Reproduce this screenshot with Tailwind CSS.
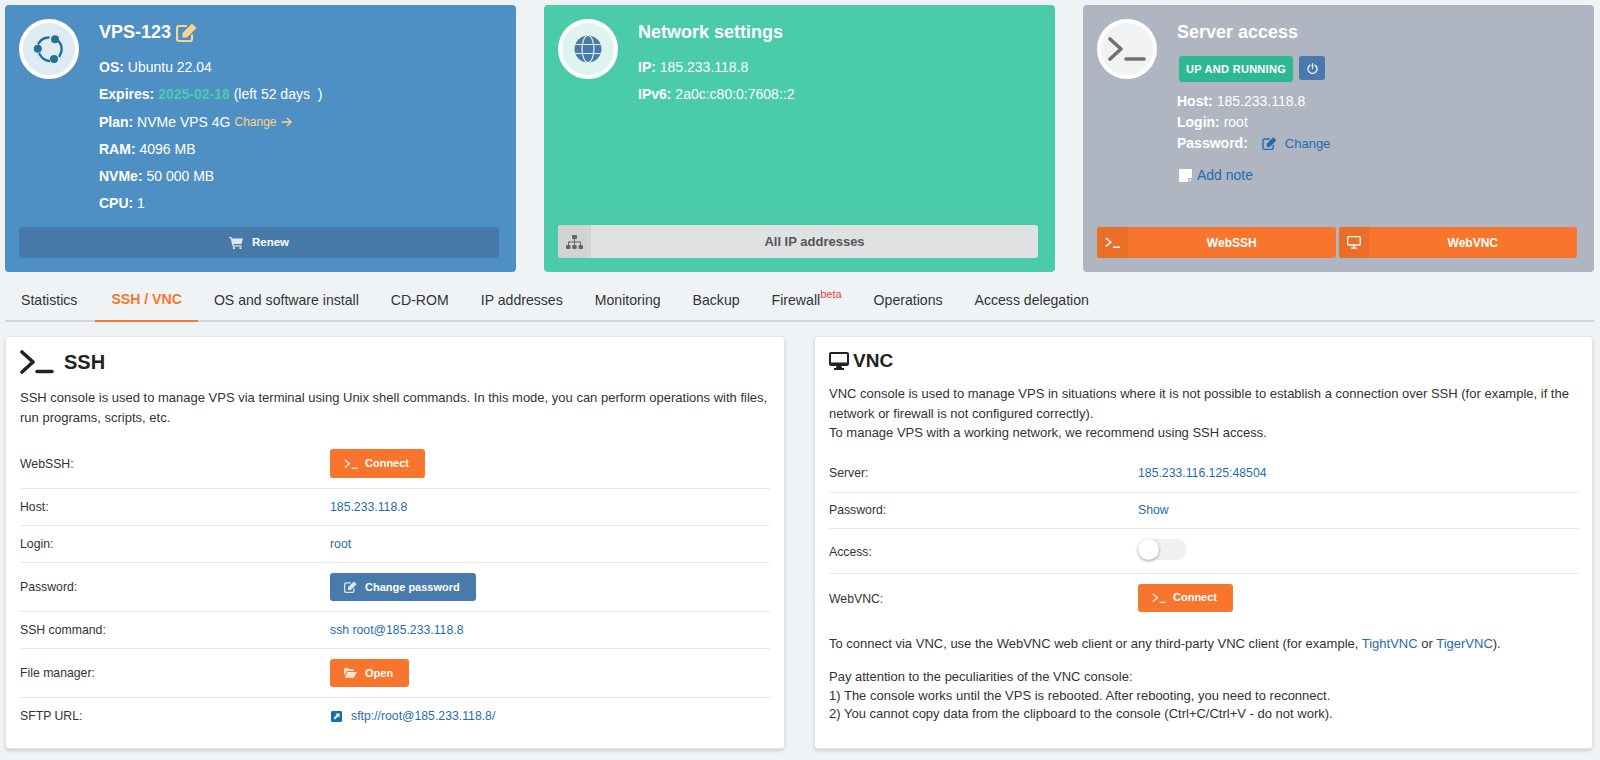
<!DOCTYPE html>
<html lang="en">
<head>
  <meta charset="UTF-8" />
  <title>VPS-123</title>
  <script src="https://cdn.jsdelivr.net/npm/@tailwindcss/browser@4"></script>
</head>
<body class="bg-[#eff3f6] font-['Liberation_Sans',Arial,sans-serif] text-[13px] text-[#333] w-[1600px] h-[760px] overflow-hidden pl-[5px] pr-[6px] pt-[5px]">

  <!-- top cards -->
  <div class="grid grid-cols-[511px_511px_511px] gap-[28px] h-[267px] text-white text-[14px]">

    <div class="bg-[#4e90c3] rounded-[4px] pl-[14px] pr-[17px] py-[14px] flex flex-col">
      <div class="flex flex-1">
        <div class="w-[60px] h-[60px] rounded-full border-[4px] border-white bg-[#dfebf3] flex items-center justify-center shrink-0">
          <svg class="w-[32px] h-[32px]" viewBox="0 0 32 32" fill="none" stroke="#22709a" stroke-width="2.400" stroke-linecap="round">
            <path d="M5.500 10.500A12 12 0 0 1 15.500 4.500" />
            <path d="M26 8.500A13 13 0 0 1 26.500 23" />
            <path d="M16 28A13 13 0 0 1 6.500 21" />
            <circle cx="22" cy="6.300" r="4" fill="#22709a" stroke="none" />
            <circle cx="4.800" cy="15.800" r="4" fill="#22709a" stroke="none" />
            <circle cx="21" cy="26" r="4" fill="#22709a" stroke="none" />
          </svg>
        </div>
        <div class="ml-[20px]">
          <div class="flex items-center h-[26px] text-[18px] font-bold">VPS-123
            <svg class="w-[21px] h-[19px] ml-[5px]" viewBox="0 0 21 19" fill="none" stroke="#fbd38d" stroke-width="2.200">
              <path d="M16 11.500V16a2 2 0 0 1-2 2H3a2 2 0 0 1-2-2V5a2 2 0 0 1 2-2h8" />
              <path d="M6.500 10 16 .5 20.500 5 11 14.500H6.500z" fill="#fbd38d" stroke="none" />
            </svg>
          </div>
          <div class="mt-[9px] leading-[27.300px]">
            <div><b>OS:</b> Ubuntu 22.04</div>
            <div><b>Expires:</b> <b class="text-[#4acba9]">2025-02-18</b> (left 52 days&nbsp; )</div>
            <div class="flex items-center gap-[4px]"><span><b>Plan:</b> NVMe VPS 4G</span>
              <span class="text-[12px] text-[#fbd38d]">Change</span>
              <svg class="w-[11px] h-[10px]" viewBox="0 0 11 10" fill="none" stroke="#fbd38d" stroke-width="1.400"><path d="M.5 5h9.500M6 1l4 4-4 4" /></svg>
            </div>
            <div><b>RAM:</b> 4096 MB</div>
            <div><b>NVMe:</b> 50 000 MB</div>
            <div><b>CPU:</b> 1</div>
          </div>
        </div>
      </div>
      <div class="h-[31px] bg-[#487aa9] rounded-[3px] flex items-center justify-center gap-[9px] text-[11.500px] font-bold">
        <svg class="w-[14px] h-[12px]" viewBox="0 0 14 12" fill="#dfe8f0"><path d="M0 0h2.600l.4 1.500h11l-1.600 5.600H4.400l.3 1.200h8v1.200H3.500L1.700 1.200H0z" /><circle cx="5" cy="11" r="1.100" /><circle cx="11.500" cy="11" r="1.100" /></svg>
        Renew
      </div>
    </div>

    <div class="bg-[#4acba9] rounded-[4px] pl-[14px] pr-[17px] py-[14px] flex flex-col">
      <div class="flex flex-1">
        <div class="w-[60px] h-[60px] rounded-full border-[4px] border-white bg-[#dff4ee] flex items-center justify-center shrink-0">
          <svg class="w-[28px] h-[28px]" viewBox="0 0 28 28">
            <circle cx="14" cy="14" r="13.500" fill="#487aa9" />
            <g fill="none" stroke="#dff4ee" stroke-width="1.200">
              <path d="M0 9.500h28M0 18.500h28" />
              <ellipse cx="14" cy="14" rx="6" ry="13.500" />
            </g>
          </svg>
        </div>
        <div class="ml-[20px]">
          <div class="flex items-center h-[26px] text-[18px] font-bold">Network settings</div>
          <div class="mt-[9px] leading-[27.300px]">
            <div><b>IP:</b> 185.233.118.8</div>
            <div><b>IPv6:</b> 2a0c:c80:0:7608::2</div>
          </div>
        </div>
      </div>
      <div class="h-[33px] bg-[#e0e1e3] rounded-[3px] flex overflow-hidden text-[13px] font-bold text-[#555]">
        <div class="w-[33px] bg-[#d1d3d5] flex items-center justify-center">
          <svg class="w-[17px] h-[14px]" viewBox="0 0 17 14" fill="#666"><rect x="6" y="0" width="5" height="4" rx=".7" /><rect x="0" y="10" width="4.500" height="4" rx="1" /><rect x="6.200" y="10" width="4.500" height="4" rx="1" /><rect x="12.500" y="10" width="4.500" height="4" rx="1" /><path d="M8 4h1v2.500h6V10h-1V7.500H9V10H8V7.500H3V10H2V6.500h6z" /></svg>
        </div>
        <div class="flex-1 flex items-center justify-center">All IP addresses</div>
      </div>
    </div>

    <div class="bg-[#afb5c1] rounded-[4px] pl-[14px] pr-[17px] py-[14px] flex flex-col">
      <div class="flex flex-1">
        <div class="w-[60px] h-[60px] rounded-full border-[4px] border-white bg-[#f1f2f3] flex items-center justify-center shrink-0">
          <svg class="w-[38px] h-[26px]" viewBox="0 0 38 26" fill="none" stroke="#717171" stroke-width="3.600" stroke-linecap="round" stroke-linejoin="round"><path d="M2 3l11 10L2 23M18 23h18" /></svg>
        </div>
        <div class="ml-[20px]">
          <div class="flex items-center h-[26px] text-[18px] font-bold">Server access</div>
          <div class="flex ml-[2px] mt-[11px] gap-[6px]">
            <div class="h-[26px] w-[114px] rounded-[3px] bg-[#2db894] flex items-center justify-center text-[11px] font-bold tracking-[0.3px]">UP AND RUNNING</div>
            <div class="h-[24px] w-[26px] rounded-[3px] bg-[#487bab] flex items-center justify-center">
              <svg class="w-[11px] h-[11px]" viewBox="0 0 11 11" fill="none" stroke="#e6eef5" stroke-width="1.400" stroke-linecap="round"><path d="M3 2.200a4.500 4.500 0 1 0 5 0M5.500 .8v4.400" /></svg>
            </div>
          </div>
          <div class="mt-[9px] leading-[21px]">
            <div><b>Host:</b> 185.233.118.8</div>
            <div><b>Login:</b> root</div>
            <div class="flex items-center"><b>Password:</b>
              <svg class="w-[15px] h-[13px] ml-[14px]" viewBox="0 0 21 19" fill="none" stroke="#1f6bb0" stroke-width="2"><path d="M16 11.500V16a2 2 0 0 1-2 2H3a2 2 0 0 1-2-2V5a2 2 0 0 1 2-2h8" /><path d="M6.500 10 16 .5 20.500 5 11 14.500H6.500z" fill="#1f6bb0" stroke="none" /></svg>
              <span class="ml-[8px] text-[13px] text-[#1f6bb0]">Change</span>
            </div>
          </div>
          <div class="flex items-center mt-[11px] ml-[2px] text-[#1f6bb0]">
            <svg class="w-[13px] h-[13px]" viewBox="0 0 13 13" fill="#fff"><path d="M1 0h11a1 1 0 0 1 1 1v8h-3a1 1 0 0 0-1 1v3H1a1 1 0 0 1-1-1V1a1 1 0 0 1 1-1z" /><path d="M10.500 10.500H13L10.500 13z" /></svg>
            <span class="ml-[5px]">Add note</span>
          </div>
        </div>
      </div>
      <div class="grid grid-cols-2 gap-[3px] text-[12px] font-bold">
        <div class="h-[31px] bg-[#f7752c] rounded-[3px] flex overflow-hidden">
          <div class="w-[31px] bg-[#ea6e28] flex items-center justify-center">
            <svg class="w-[15px] h-[11px]" viewBox="0 0 15 11" fill="none" stroke="#fff" stroke-width="1.500"><path d="M.8 1l5 4.200-5 4.300M8 10.200h7" /></svg>
          </div>
          <div class="flex-1 flex items-center justify-center">WebSSH</div>
        </div>
        <div class="h-[31px] bg-[#f7752c] rounded-[3px] flex overflow-hidden">
          <div class="w-[30px] bg-[#ea6e28] flex items-center justify-center">
            <svg class="w-[14px] h-[13px]" viewBox="0 0 14 13" fill="none" stroke="#fff" stroke-width="1.300"><rect x=".7" y=".7" width="12.600" height="8.300" rx="1" /><path d="M7 9v3M4 12.200h6" /></svg>
          </div>
          <div class="flex-1 flex items-center justify-center">WebVNC</div>
        </div>
      </div>
    </div>
  </div>

  <!-- tabs -->
  <div class="flex h-[50px] pt-[10px] border-b-[2px] border-[#d3d6d9] text-[14.100px] text-[#333] items-stretch">
    <div class="pl-[16px] pr-[18px] flex items-center">Statistics</div>
    <div class="px-[16px] flex items-center font-bold text-[#f7752c] border-b-[2px] border-[#f7752c] -mb-[2px] pb-[2px]">SSH / VNC</div>
    <div class="px-[16px] flex items-center">OS and software install</div>
    <div class="px-[16px] flex items-center">CD-ROM</div>
    <div class="px-[16px] flex items-center">IP addresses</div>
    <div class="px-[16px] flex items-center">Monitoring</div>
    <div class="px-[16px] flex items-center">Backup</div>
    <div class="px-[16px] flex items-center">Firewall<sup class="text-[11px] text-[#ef4444] -mt-[4px]">beta</sup></div>
    <div class="px-[16px] flex items-center">Operations</div>
    <div class="px-[16px] flex items-center">Access delegation</div>
  </div>

  <!-- panels -->
  <div class="grid grid-cols-[780px_779px] gap-[29px] mt-[14px]">

    <div class="bg-white border border-[#e3e6e9] rounded-[4px] shadow-[0_2px_3px_rgba(0,0,0,.14)] h-[413px] px-[14px] pt-[13px] text-[12.250px]">
      <div class="flex items-center h-[24px] text-[20px] font-bold text-[#222]">
        <svg class="w-[34px] h-[24px] mr-[10px]" viewBox="0 0 34 24" fill="none" stroke="#222" stroke-width="3.600" stroke-linecap="round" stroke-linejoin="round"><path d="M2 2l11 10L2 22M17 21.500h15" /></svg>
        SSH
      </div>
      <p class="mt-[14px] leading-[20px] text-[13px]">SSH console is used to manage VPS via terminal using Unix shell commands. In this mode, you can perform operations with files,<br>run programs, scripts, etc.</p>

      <div class="mt-[11px]">
        <div class="grid grid-cols-[310px_1fr] items-center py-[10px] h-[49px]">
          <div class="mt-[1px]">WebSSH:</div>
          <div class="w-[95px] h-[29px] bg-[#f7752c] rounded-[3px] flex items-center text-white font-bold text-[11px] pl-[14px] gap-[7px]">
            <svg class="w-[14px] h-[10px]" viewBox="0 0 15 11" fill="none" stroke="#fff" stroke-width="1.300"><path d="M.8 1l5 4.200-5 4.300M8 10.200h7" /></svg>Connect
          </div>
        </div>
        <div class="grid grid-cols-[310px_1fr] items-center border-t border-[#e6e8ea] h-[37px]">
          <div>Host:</div><div class="text-[#1f6bb0]">185.233.118.8</div>
        </div>
        <div class="grid grid-cols-[310px_1fr] items-center border-t border-[#e6e8ea] h-[37px]">
          <div>Login:</div><div class="text-[#1f6bb0]">root</div>
        </div>
        <div class="grid grid-cols-[310px_1fr] items-center border-t border-[#e6e8ea] h-[49px]">
          <div>Password:</div>
          <div class="w-[146px] h-[28px] bg-[#487bab] rounded-[3px] flex items-center text-white font-bold text-[11px] pl-[14px] gap-[8px]">
            <svg class="w-[13px] h-[12px]" viewBox="0 0 21 19" fill="none" stroke="#dbe6f0" stroke-width="2"><path d="M16 11.500V16a2 2 0 0 1-2 2H3a2 2 0 0 1-2-2V5a2 2 0 0 1 2-2h8" /><path d="M6.500 10 16 .5 20.500 5 11 14.500H6.500z" fill="#dbe6f0" stroke="none" /></svg>
            Change password
          </div>
        </div>
        <div class="grid grid-cols-[310px_1fr] items-center border-t border-[#e6e8ea] h-[37px]">
          <div>SSH command:</div><div class="text-[#1f6bb0]">ssh root@185.233.118.8</div>
        </div>
        <div class="grid grid-cols-[310px_1fr] items-center border-t border-[#e6e8ea] h-[49px]">
          <div>File manager:</div>
          <div class="w-[79px] h-[28px] bg-[#f7752c] rounded-[3px] flex items-center text-white font-bold text-[11px] pl-[14px] gap-[8px]">
            <svg class="w-[13px] h-[10px]" viewBox="0 0 13 10" fill="#fde3d3"><path d="M0 1a1 1 0 0 1 1-1h3l1 1.200h4a1 1 0 0 1 1 1V3H3L0 7.500z" /><path d="M3.400 4H13l-2.800 5.300a1 1 0 0 1-.8.500H.8z" /></svg>
            Open
          </div>
        </div>
        <div class="grid grid-cols-[310px_1fr] items-center border-t border-[#e6e8ea] h-[38px]">
          <div>SFTP URL:</div>
          <div class="flex items-center text-[#1f6bb0]">
            <svg class="w-[11px] h-[11px] ml-[1px] mr-[9px]" viewBox="0 0 11 11"><rect width="11" height="11" rx="1.200" fill="#1f6bb0" /><path d="M4.500 2.500h4v4L7.200 5.200 4 8.400 2.600 7 5.800 3.800z" fill="#fff" /></svg>
            sftp://root@185.233.118.8/
          </div>
        </div>
      </div>
    </div>

    <div class="bg-white border border-[#e3e6e9] rounded-[4px] shadow-[0_2px_3px_rgba(0,0,0,.14)] h-[413px] pl-[14px] pr-[13px] pt-[14px]">
      <div class="flex items-center h-[20px] text-[19px] font-bold text-[#222]">
        <svg class="w-[20px] h-[18px] mr-[4px]" viewBox="0 0 20 18" fill="#222"><path d="M2 0h16a2 2 0 0 1 2 2v10a2 2 0 0 1-2 2h-5.500l.5 2h2v2H5v-2h2l.5-2H2a2 2 0 0 1-2-2V2a2 2 0 0 1 2-2zm0 2v8.500h16V2z" /></svg>
        VNC
      </div>
      <p class="mt-[13px] leading-[19.500px]">VNC console is used to manage VPS in situations where it is not possible to establish a connection over SSH (for example, if the<br>network or firewall is not configured correctly).<br>To manage VPS with a working network, we recommend using SSH access.</p>

      <div class="mt-[12px] text-[12.250px]">
        <div class="grid grid-cols-[309px_1fr] items-center h-[37px]">
          <div>Server:</div><div class="text-[#1f6bb0]">185.233.116.125:48504</div>
        </div>
        <div class="grid grid-cols-[309px_1fr] items-center border-t border-[#e6e8ea] h-[36px]">
          <div>Password:</div><div class="text-[#1f6bb0]">Show</div>
        </div>
        <div class="grid grid-cols-[309px_1fr] items-center border-t border-[#e6e8ea] h-[45px]">
          <div class="mt-[3px]">Access:</div>
          <div class="relative w-[49px] h-[21px] rounded-full bg-[#f0f0f0] -mt-[3px]">
            <div class="absolute left-0 top-0 w-[21px] h-[21px] rounded-full bg-white shadow-[0_1px_3px_rgba(0,0,0,.4)]"></div>
          </div>
        </div>
        <div class="grid grid-cols-[309px_1fr] items-center border-t border-[#e6e8ea] h-[49px]">
          <div class="mt-[3px]">WebVNC:</div>
          <div class="w-[95px] h-[28px] bg-[#f7752c] rounded-[3px] flex items-center text-white font-bold text-[11px] pl-[14px] gap-[7px]">
            <svg class="w-[14px] h-[10px]" viewBox="0 0 15 11" fill="none" stroke="#fff" stroke-width="1.300"><path d="M.8 1l5 4.200-5 4.300M8 10.200h7" /></svg>Connect
          </div>
        </div>
      </div>
      <p class="mt-[12px]">To connect via VNC, use the WebVNC web client or any third-party VNC client (for example, <span class="text-[#1f6bb0]">TightVNC</span> or <span class="text-[#1f6bb0]">TigerVNC</span>).</p>
      <p class="mt-[15px] leading-[18.500px]">Pay attention to the peculiarities of the VNC console:<br>1) The console works until the VPS is rebooted. After rebooting, you need to reconnect.<br>2) You cannot copy data from the clipboard to the console (Ctrl+C/Ctrl+V - do not work).</p>
    </div>
  </div>
</body>
</html>
